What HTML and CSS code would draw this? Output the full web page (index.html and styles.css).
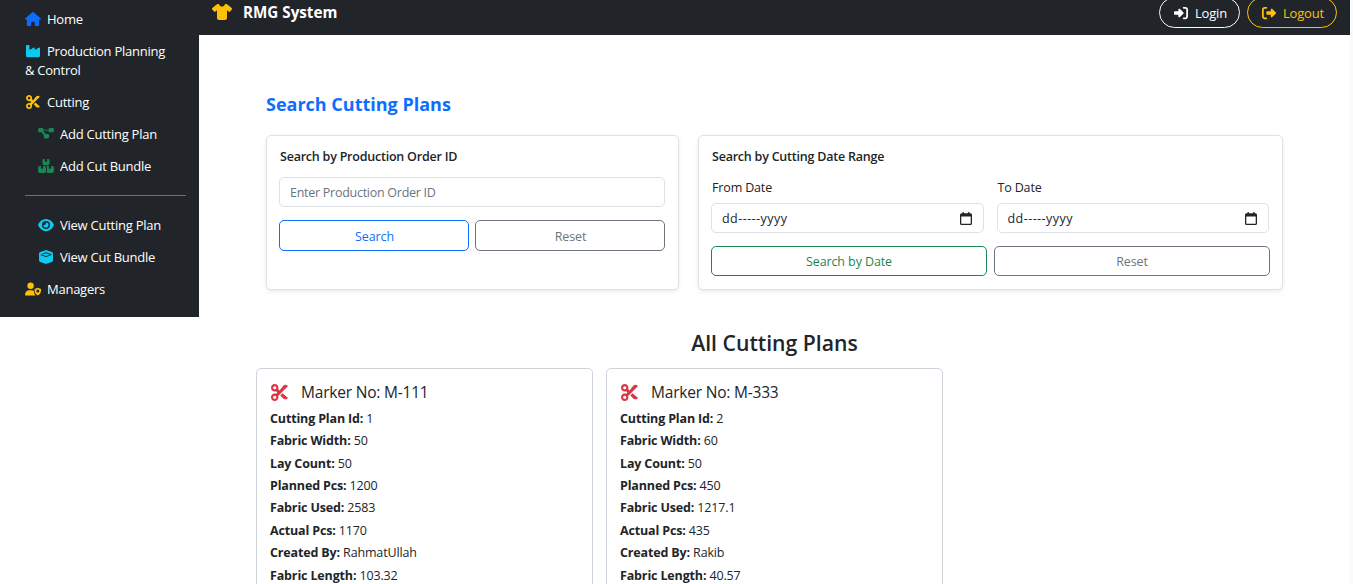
FILE: index.html
```html
<!DOCTYPE html>
<html lang="en">
<head>
<meta charset="utf-8">
<title>RMG System</title>
<link rel="stylesheet" href="styles.css">
</head>
<body>
<svg class="sprite" aria-hidden="true">
  <symbol id="i-house" viewBox="0 0 576 512"><path d="M575.800 255.500c0 18-15 32.100-32 32.100h-32l.7 160.200c0 2.700-.2 5.400-.5 8.100V472c0 22.100-17.900 40-40 40H456c-1.100 0-2.200 0-3.300-.1c-1.400 .1-2.800 .1-4.200 .1H416 392c-22.100 0-40-17.900-40-40V448 384c0-17.700-14.300-32-32-32H256c-17.700 0-32 14.300-32 32v64 24c0 22.100-17.900 40-40 40H160 128.100c-1.500 0-3-.1-4.500-.2c-1.200 .1-2.400 .2-3.600 .2H104c-22.100 0-40-17.900-40-40V360c0-.9 0-1.900 .1-2.800V287.600H32c-18 0-32-14-32-32.100c0-9 3-17 10-24L266.400 8c7-7 15-8 22-8s15 2 21 7L564.800 231.500c8 7 12 15 11 24z"/></symbol>
  <symbol id="i-factory" viewBox="0 0 576 512"><path d="M64 32C46.300 32 32 46.300 32 64V304v48 80c0 26.500 21.500 48 48 48H496c26.500 0 48-21.500 48-48V304 152.200c0-18.200-19.400-29.700-35.500-21.100L352 215.400V152.200c0-18.200-19.400-29.700-35.500-21.100L160 215.400V64c0-17.700-14.300-32-32-32H64z"/></symbol>
  <symbol id="i-scissors" viewBox="0 0 512 512"><path d="M256 192l-39.500-39.500c4.900-12.600 7.500-26.200 7.500-40.500C224 50.100 173.900 0 112 0S0 50.100 0 112s50.100 112 112 112c14.300 0 27.900-2.700 40.500-7.500L192 256l-39.500 39.500c-12.600-4.900-26.200-7.500-40.500-7.500C50.100 288 0 338.100 0 400s50.100 112 112 112s112-50.100 112-112c0-14.300-2.700-27.900-7.500-40.500L499.200 76.800c7.100-7.100 7.100-18.900 0-26c-35.300-35.300-92.700-35.300-128 0L256 192zm22.600 150.600L371.200 435.200c35.300 35.300 92.700 35.300 128 0c7.100-7.100 7.100-18.900 0-26L342.600 278.600l-64 64zM64 112a48 48 0 1 1 96 0 48 48 0 1 1 -96 0zm48 240a48 48 0 1 1 0 96 48 48 0 1 1 0-96z"/></symbol>
  <symbol id="i-diagram" viewBox="0 0 576 512"><path d="M0 80C0 53.500 21.500 32 48 32h96c26.500 0 48 21.500 48 48V96H384V80c0-26.500 21.500-48 48-48h96c26.500 0 48 21.500 48 48v64c0 26.500-21.500 48-48 48H432c-26.500 0-48-21.500-48-48V128H192v16c0 1.700-.1 3.400-.3 5L272 256h80c26.500 0 48 21.500 48 48v64c0 26.500-21.500 48-48 48H256c-26.500 0-48-21.500-48-48V304c0-1.700 .1-3.400 .3-5L128 192H48c-26.500 0-48-21.500-48-48V80z"/></symbol>
  <symbol id="i-cubes" viewBox="0 0 576 512"><path d="M248 0H208c-26.500 0-48 21.500-48 48V160c0 35.300 28.700 64 64 64H352c35.300 0 64-28.700 64-64V48c0-26.500-21.500-48-48-48H328V80c0 8.800-7.200 16-16 16H264c-8.800 0-16-7.200-16-16V0zM64 256c-35.300 0-64 28.700-64 64V448c0 35.300 28.700 64 64 64H224c35.300 0 64-28.700 64-64V320c0-35.300-28.700-64-64-64H184v80c0 8.800-7.200 16-16 16H120c-8.800 0-16-7.200-16-16V256H64zM352 512H512c35.300 0 64-28.700 64-64V320c0-35.300-28.700-64-64-64H472v80c0 8.800-7.200 16-16 16H408c-8.800 0-16-7.200-16-16V256H352c-15 0-28.800 5.100-39.700 13.800c4.900 10.400 7.700 22 7.700 34.200V464c0 12.200-2.800 23.800-7.700 34.200C323.200 506.900 337 512 352 512z"/></symbol>
  <symbol id="i-eye" viewBox="0 0 576 512"><path d="M288 32c-80.800 0-145.500 36.800-192.600 80.600C48.600 156 17.300 208 2.500 243.700c-3.300 7.900-3.300 16.700 0 24.600C17.300 304 48.600 356 95.400 399.400C142.500 443.200 207.200 480 288 480s145.500-36.800 192.600-80.600c46.800-43.500 78.100-95.400 93-131.100c3.300-7.900 3.300-16.700 0-24.600c-14.900-35.700-46.200-87.700-93-131.100C433.500 68.800 368.800 32 288 32zM144 256a144 144 0 1 1 288 0 144 144 0 1 1 -288 0zm144-64c0 35.300-28.700 64-64 64c-7.100 0-13.900-1.200-20.300-3.300c-5.500-1.800-11.900 1.600-11.700 7.400c.3 6.900 1.300 13.800 3.200 20.700c13.700 51.200 66.400 81.600 117.600 67.900s81.600-66.400 67.900-117.600c-11.100-41.500-47.800-69.400-88.600-71.100c-5.800-.2-9.200 6.100-7.400 11.700c2.100 6.400 3.300 13.200 3.300 20.300z"/></symbol>
  <symbol id="i-box" viewBox="0 0 512 512"><path d="M234.500 5.700c13.900-5 29.100-5 43.100 0l192 68.600C495 83.400 512 107.500 512 134.600V377.400c0 27-17 51.200-42.500 60.300l-192 68.600c-13.900 5-29.100 5-43.100 0l-192-68.600C17 428.600 0 404.500 0 377.400V134.600c0-27 17-51.200 42.500-60.300z"/><path class="box-cut" d="M64 170 256 240 448 170 256 100 130 146"/></symbol>
  <symbol id="i-manager" viewBox="0 0 640 512"><path d="M224 256A128 128 0 1 0 224 0a128 128 0 1 0 0 256zm-45.700 48C79.800 304 0 383.800 0 482.300C0 498.700 13.300 512 29.700 512H420c-30-30-56-84-60-176c-30-20-60-32-90-32H178.300z"/><path fill-rule="evenodd" d="M512 208l128 48v64c0 90-50 160-128 192c-78-32-128-102-128-192v-64zm0 70a60 60 0 1 0 0 120 60 60 0 1 0 0-120z"/></symbol>
  <symbol id="i-shirt" viewBox="0 0 640 512"><path d="M211.800 0c7.800 0 14.300 5.700 16.700 13.200C240.800 51.900 277.100 80 320 80s79.200-28.100 91.500-66.800C413.900 5.700 420.400 0 428.200 0h12.600c22.500 0 44.200 7.900 61.500 22.300L628.500 127.400c6.600 5.500 10.700 13.500 11.400 22.100s-2.100 17.100-7.800 23.600l-56 64c-11.400 13.100-31.200 14.600-44.600 3.500L480 197.700V448c0 35.300-28.700 64-64 64H224c-35.300 0-64-28.700-64-64V197.700l-51.500 42.900c-13.300 11.100-33.100 9.600-44.600-3.500l-56-64c-5.700-6.500-8.500-15-7.800-23.600s4.800-16.600 11.400-22.100L137.700 22.300C155 7.900 176.700 0 199.200 0h12.600z"/></symbol>
  <symbol id="i-login" viewBox="0 0 512 512"><path d="M217.900 105.900L340.700 228.700c7.200 7.200 11.300 17.100 11.300 27.300s-4.100 20.100-11.300 27.300L217.900 406.100c-6.400 6.400-15 9.900-24 9.900c-18.700 0-33.900-15.200-33.900-33.900l0-62.100L32 320c-17.700 0-32-14.300-32-32l0-64c0-17.700 14.300-32 32-32l128 0 0-62.100c0-18.700 15.200-33.900 33.900-33.900c9 0 17.600 3.600 24 9.900zM352 416l64 0c17.700 0 32-14.300 32-32l0-256c0-17.700-14.300-32-32-32l-64 0c-17.700 0-32-14.300-32-32s14.300-32 32-32l64 0c53 0 96 43 96 96l0 256c0 53-43 96-96 96l-64 0c-17.700 0-32-14.300-32-32s14.300-32 32-32z"/></symbol>
  <symbol id="i-logout" viewBox="0 0 512 512"><path d="M377.900 105.900L500.700 228.700c7.200 7.200 11.300 17.100 11.300 27.300s-4.100 20.100-11.300 27.300L377.900 406.100c-6.400 6.400-15 9.900-24 9.900c-18.700 0-33.900-15.200-33.900-33.900l0-62.100-128 0c-17.700 0-32-14.300-32-32l0-64c0-17.700 14.300-32 32-32l128 0 0-62.100c0-18.700 15.200-33.900 33.900-33.900c9 0 17.600 3.600 24 9.900zM160 96L96 96c-17.700 0-32 14.300-32 32l0 256c0 17.700 14.300 32 32 32l64 0c17.700 0 32 14.300 32 32s-14.300 32-32 32l-64 0c-53 0-96-43-96-96L0 128C0 75 43 32 96 32l64 0c17.700 0 32 14.300 32 32s-14.300 32-32 32z"/></symbol>
  <symbol id="i-calendar" viewBox="0 0 12 13"><path fill-rule="evenodd" d="M2.500 0h1.300v1.300h4.400V0h1.300v1.300h1A1.500 1.500 0 0 1 12 2.800v8.700A1.500 1.500 0 0 1 10.500 13h-9A1.500 1.500 0 0 1 0 11.500V2.800A1.500 1.500 0 0 1 1.500 1.300h1ZM1.300 4.500v7c0 .1.100.2.200.2h9c.1 0 .2-.1.200-.2v-7Z"/></symbol>
</svg>

<div class="shell">
  <aside class="sidebar">
    <a class="nav-item"><svg class="ico ico-blue"><use href="#i-house"/></svg>Home</a>
    <a class="nav-item"><svg class="ico ico-cyan"><use href="#i-factory"/></svg>Production Planning<br>&amp; Control</a>
    <a class="nav-item"><svg class="ico ico-yellow"><use href="#i-scissors"/></svg>Cutting</a>
    <a class="nav-item nav-sub"><svg class="ico ico-green"><use href="#i-diagram"/></svg>Add Cutting Plan</a>
    <a class="nav-item nav-sub"><svg class="ico ico-green"><use href="#i-cubes"/></svg>Add Cut Bundle</a>
    <hr class="nav-rule">
    <a class="nav-item nav-sub"><svg class="ico ico-cyan"><use href="#i-eye"/></svg>View Cutting Plan</a>
    <a class="nav-item nav-sub"><svg class="ico ico-cyan"><use href="#i-box"/></svg>View Cut Bundle</a>
    <a class="nav-item"><svg class="ico ico-yellow"><use href="#i-manager"/></svg>Managers</a>
  </aside>

  <div class="column">
    <header class="topbar">
      <div class="brand"><svg class="brand-ico"><use href="#i-shirt"/></svg>RMG System</div>
      <div class="auth">
        <a class="pill pill-light"><svg class="pill-ico"><use href="#i-login"/></svg>Login</a>
        <a class="pill pill-warn"><svg class="pill-ico"><use href="#i-logout"/></svg>Logout</a>
      </div>
    </header>

    <main class="main">
      <h2 class="page-title">Search Cutting Plans</h2>
      <section class="search-grid">
        <div class="panel">
          <h3 class="panel-title">Search by Production Order ID</h3>
          <input class="field" type="text" placeholder="Enter Production Order ID">
          <div class="btn-row">
            <button class="btn btn-blue">Search</button>
            <button class="btn btn-grey">Reset</button>
          </div>
        </div>
        <div class="panel panel-date">
          <h3 class="panel-title">Search by Cutting Date Range</h3>
          <div class="date-row">
            <label class="date-col"><span class="date-label">From Date</span>
              <span class="field date-field"><input class="date-text" type="text" value="dd-----yyyy" readonly><svg class="cal-ico"><use href="#i-calendar"/></svg></span></label>
            <label class="date-col"><span class="date-label">To Date</span>
              <span class="field date-field"><input class="date-text" type="text" value="dd-----yyyy" readonly><svg class="cal-ico"><use href="#i-calendar"/></svg></span></label>
          </div>
          <div class="btn-row btn-row-date">
            <button class="btn btn-green">Search by Date</button>
            <button class="btn btn-grey">Reset</button>
          </div>
        </div>
      </section>

      <h2 class="list-title">All Cutting Plans</h2>
      <section class="plan-grid">
        <article class="plan">
          <h3 class="plan-title"><svg class="plan-ico"><use href="#i-scissors"/></svg>Marker No: M-111</h3>
          <p class="row"><b>Cutting Plan Id:</b> 1</p>
          <p class="row"><b>Fabric Width:</b> 50</p>
          <p class="row"><b>Lay Count:</b> 50</p>
          <p class="row"><b>Planned Pcs:</b> 1200</p>
          <p class="row"><b>Fabric Used:</b> 2583</p>
          <p class="row"><b>Actual Pcs:</b> 1170</p>
          <p class="row"><b>Created By:</b> RahmatUllah</p>
          <p class="row"><b>Fabric Length:</b> 103.32</p>
        </article>
        <article class="plan">
          <h3 class="plan-title"><svg class="plan-ico"><use href="#i-scissors"/></svg>Marker No: M-333</h3>
          <p class="row"><b>Cutting Plan Id:</b> 2</p>
          <p class="row"><b>Fabric Width:</b> 60</p>
          <p class="row"><b>Lay Count:</b> 50</p>
          <p class="row"><b>Planned Pcs:</b> 450</p>
          <p class="row"><b>Fabric Used:</b> 1217.1</p>
          <p class="row"><b>Actual Pcs:</b> 435</p>
          <p class="row"><b>Created By:</b> Rakib</p>
          <p class="row"><b>Fabric Length:</b> 40.57</p>
        </article>
      </section>
    </main>
  </div>
</div>
</body>
</html>
```
FILE: styles.css
```css
* { box-sizing: border-box; }
html, body { margin: 0; height: 584px; overflow: hidden; background: #fafafa; }
body {
  font-family: "Open Sans", "Noto Sans", sans-serif;
  font-size: 13px;
  color: #212529;
}
.sprite { display: none; }
.shell { display: flex; width: 1350px; height: 584px; overflow: hidden; align-items: flex-start; background: #fff; }

.sidebar {
  position: relative;
  z-index: 1;
  width: 199px;
  height: 317px;
  flex: none;
  background: #212529;
  padding: 3px 13px 0 25px;
}
.nav-item {
  display: block;
  color: #fff;
  line-height: 19px;
  padding: 6.500px 0;
  letter-spacing: -.25px;
}
.nav-sub { padding-left: 13px; }
.ico { width: 16px; height: 14px; margin-right: 6px; vertical-align: -2px; }
.ico-blue { fill: #0d6efd; }
.ico-cyan { fill: #0dcaf0; }
.ico-yellow { fill: #ffc107; }
.ico-green { fill: #198754; }
.box-cut { fill: none; stroke: #212529; stroke-width: 36px; }
.nav-rule { border: 0; border-top: 1px solid #6c7075; margin: 13px 0 13px; }

.column { flex: 1; min-width: 0; }
.topbar {
  height: 35px;
  margin-left: -199px;
  padding: 0 13px 0 212px;
  background: #212529;
  display: flex;
  justify-content: space-between;
}
.brand {
  color: #fff;
  font-weight: 700;
  font-size: 15.200px;
  display: flex;
  align-items: center;
  height: 24px;
}
.brand-ico { width: 20px; height: 16px; fill: #ffc107; margin-right: 11px; }
.auth { display: flex; gap: 7px; margin-top: -3px; }
.pill {
  height: 31px;
  border-radius: 16px;
  border: 1px solid;
  display: flex;
  align-items: center;
  padding: 0 14px;
  font-size: 13px;
  letter-spacing: -.2px;
}
.pill-light { color: #fff; border-color: #f8f9fa; width: 81px; }
.pill-warn { color: #ffc107; border-color: #ffc107; width: 90px; }
.pill-ico { width: 14px; height: 14px; fill: currentColor; margin-right: 7px; flex: none; }

.main { padding: 57px 67px 0 57px; }
.page-title {
  margin: 0 0 18px 10px;
  font-size: 18px;
  font-weight: 700;
  line-height: 25px;
  color: #0d6efd;
}
.search-grid {
  display: grid;
  grid-template-columns: 413px 585px;
  gap: 19px;
  margin-left: 10px;
  height: 155px;
}
.panel {
  background: #fff;
  border: 1px solid #dee2e6;
  border-radius: 5px;
  box-shadow: 0 2px 4px rgba(0,0,0,.08);
  padding: 12px 13px 12px 12px;
}
.panel-date { padding-right: 12px; }
.panel-title { margin: 0 0 12px; padding-left: 1px; font-size: 12.500px; font-weight: 600; line-height: 17px; letter-spacing: -.22px; }
.field {
  display: block;
  width: 100%;
  height: 30px;
  border: 1px solid #dee2e6;
  border-radius: 5px;
  padding: 0 10px;
  font: inherit;
  font-size: 12.500px;
  letter-spacing: -.27px;
  color: #212529;
  background: #fff;
}
.field::placeholder { color: #6c757d; }
.date-field { display: flex; align-items: center; justify-content: space-between; }
.date-text {
  flex: 1;
  min-width: 0;
  border: 0;
  padding: 0;
  outline: 0;
  background: none;
  font: inherit;
  letter-spacing: .45px;
  color: #212529;
}
.cal-ico { width: 12px; height: 13px; fill: #212529; flex: none; margin-right: 1px; }
.btn-row { display: flex; gap: 6px; margin-top: 13px; }
.btn {
  flex: 1;
  height: 31px;
  border: 1px solid;
  border-radius: 5px;
  background: #fff;
  font: inherit;
  font-size: 12.500px;
  letter-spacing: -.1px;
  padding: 1px 0 0 1px;
}
.btn-blue { color: #0d6efd; border-color: #0d6efd; }
.btn-grey { color: #6c757d; border-color: #6c757d; }
.btn-green { color: #198754; border-color: #198754; }
.btn-row-date { gap: 7px; }
.btn-row-date .btn { height: 30px; padding: 0; }
.date-row { display: flex; gap: 13px; margin-top: 14px; margin-right: 1px; }
.date-col { flex: 1; display: block; }
.date-label { display: block; font-size: 12.500px; line-height: 17px; margin-bottom: 7px; letter-spacing: -.15px; padding-left: 1px; }

.list-title {
  margin: 38px -10px 11px 0;
  text-align: center;
  font-size: 21.200px;
  font-weight: 600;
  line-height: 29px;
}
.plan-grid { display: flex; gap: 13px; }
.plan {
  width: 337px;
  height: 260px;
  flex: none;
  border: 1px solid #ced4da;
  border-radius: 5px;
  padding: 11px 13px;
}
.plan-title {
  margin: 0 0 3.800px;
  font-size: 15.500px;
  font-weight: 500;
  letter-spacing: -.2px;
  line-height: 24px;
  display: flex;
  align-items: center;
}
.plan-ico { width: 17px; height: 17px; fill: #dc3545; margin-left: 1px; margin-right: 13px; flex: none; }
.row { margin: 0; font-size: 12.500px; line-height: 22.400px; letter-spacing: -.15px; }
.row b { font-weight: 700; }
```
